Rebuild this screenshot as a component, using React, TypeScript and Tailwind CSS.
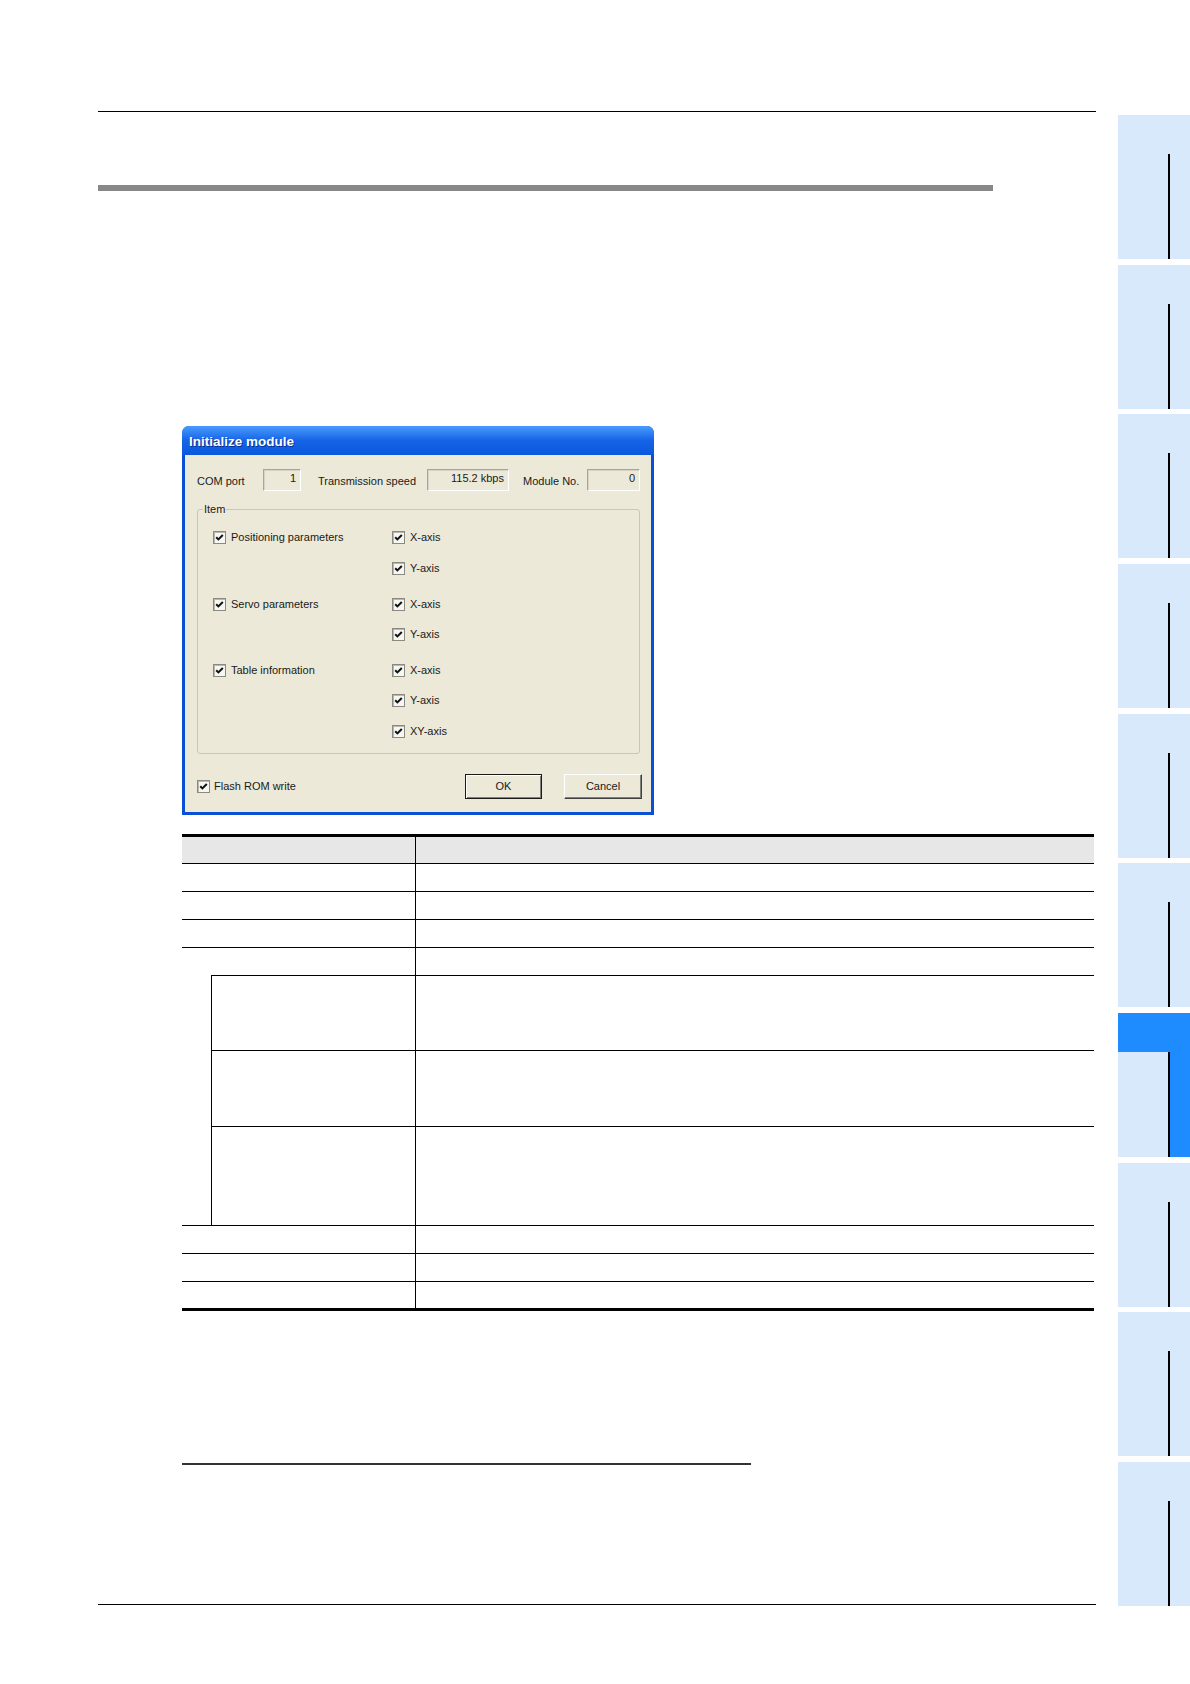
import React from "react";

const font = { fontFamily: '"Liberation Sans", Arial, sans-serif' };

function Check() {
  return (
    <span className="flex h-[13px] w-[13px] shrink-0 items-center justify-center border border-[#8a8a80] bg-[#f6f6f2] shadow-[inset_1px_1px_0_#b8b8b0]">
      <svg width="9" height="9" viewBox="0 0 9 9">
        <path d="M1.2 4.2 L3.4 6.4 L7.8 2" fill="none" stroke="#111" strokeWidth="2" />
      </svg>
    </span>
  );
}

function CheckItem({ label }: { label: string }) {
  return (
    <div className="flex h-[20px] items-center gap-[5px]">
      <Check />
      <span className="text-[11px] leading-none text-[#1a1a1a]">{label}</span>
    </div>
  );
}

function ValueBox({ w, value }: { w: string; value: string }) {
  return (
    <div
      className={`${w} flex h-[22px] items-start justify-end border-t border-l border-[#a7a699] border-b border-r border-b-white border-r-white bg-[#ece9d8] pr-[4px] pt-[3px] text-[11px] leading-none text-[#1a1a1a] shadow-[inset_1px_1px_0_#d6d3c6]`}
    >
      {value}
    </div>
  );
}

function Dialog() {
  return (
    <div
      className="ml-[84px] flex h-[389px] w-[472px] flex-col rounded-t-[7px] bg-[#0a4fd6]"
      style={font}
    >
      <div className="flex h-[29px] items-center rounded-t-[7px] bg-gradient-to-b from-[#4a9bff] via-[#1563e6] to-[#0a58de] pl-[7px] pt-[3px]">
        <span className="text-[13.5px] font-bold text-white [text-shadow:1px_1px_0_#0a2f8a]">
          Initialize module
        </span>
      </div>
      <div className="mx-[3px] mb-[3px] flex flex-1 flex-col bg-[#ece9d8] pl-[12px]">
        <div className="mt-[14px] flex h-[22px] items-center text-[11px] text-[#1a1a1a]">
          <span className="w-[66px] pt-[3px]">COM port</span>
          <ValueBox w="w-[38px]" value="1" />
          <span className="ml-[17px] w-[109px] pt-[3px]">Transmission speed</span>
          <ValueBox w="w-[82px]" value="115.2 kbps" />
          <span className="ml-[14px] w-[64px] pt-[3px]">Module No.</span>
          <ValueBox w="w-[53px]" value="0" />
        </div>

        <div className="relative mt-[18px] h-[245px] w-[443px] rounded-[3px] border border-[#c9c7b9] pl-[15px] pt-[17px]">
          <span className="absolute left-[5px] top-[-8px] bg-[#ece9d8] px-[1px] text-[11px] leading-[14px] text-[#1a1a1a]">
            Item
          </span>
          <div className="flex">
            <div className="w-[179px]">
              <CheckItem label="Positioning parameters" />
            </div>
            <div className="flex flex-col gap-[11px]">
              <CheckItem label="X-axis" />
              <CheckItem label="Y-axis" />
            </div>
          </div>
          <div className="mt-[16px] flex">
            <div className="w-[179px]">
              <CheckItem label="Servo parameters" />
            </div>
            <div className="flex flex-col gap-[10px]">
              <CheckItem label="X-axis" />
              <CheckItem label="Y-axis" />
            </div>
          </div>
          <div className="mt-[16px] flex">
            <div className="w-[179px]">
              <CheckItem label="Table information" />
            </div>
            <div className="flex flex-col gap-[10.5px]">
              <CheckItem label="X-axis" />
              <CheckItem label="Y-axis" />
              <CheckItem label="XY-axis" />
            </div>
          </div>
        </div>

        <div className="mt-[20px] flex h-[25px] items-center">
          <div className="w-[268px]">
            <div className="flex items-center gap-[4px]">
              <Check />
              <span className="text-[11px] leading-none text-[#1a1a1a]">Flash ROM write</span>
            </div>
          </div>
          <div className="flex h-[25px] w-[77px] items-center justify-center border border-[#1a1a1a] bg-[#ece9d8] text-[11px] text-[#1a1a1a] shadow-[inset_1px_1px_0_#ffffff,inset_-1px_-1px_0_#808080]">
            OK
          </div>
          <div className="ml-[22px] flex h-[25px] w-[78px] items-center justify-center border-t border-l border-white border-b border-r border-b-[#404040] border-r-[#404040] bg-[#ece9d8] text-[11px] text-[#1a1a1a] shadow-[inset_-1px_-1px_0_#808080]">
            Cancel
          </div>
        </div>
      </div>
    </div>
  );
}

function Row({ h }: { h: string }) {
  return (
    <div className={`flex ${h} border-t border-black`}>
      <div className="w-[234px] border-r border-black" />
      <div className="flex-1" />
    </div>
  );
}

function SubRow({ h }: { h: string }) {
  return (
    <div className={`flex ${h} border-t border-black`}>
      <div className="w-[204px] border-r border-black" />
      <div className="flex-1" />
    </div>
  );
}

function Table() {
  return (
    <div className="ml-[84px] flex w-[912px] flex-col border-t-[3px] border-b-[3px] border-black">
      <div className="flex h-[26px] bg-[#e7e7e7]">
        <div className="w-[234px] border-r border-black" />
        <div className="flex-1" />
      </div>
      <Row h="h-[28px]" />
      <Row h="h-[28px]" />
      <Row h="h-[28px]" />
      <Row h="h-[28px]" />
      <div className="flex">
        <div className="w-[29px]" />
        <div className="flex flex-1 flex-col border-l border-black">
          <SubRow h="h-[75px]" />
          <SubRow h="h-[76px]" />
          <SubRow h="h-[99px]" />
        </div>
      </div>
      <Row h="h-[28px]" />
      <Row h="h-[28px]" />
      <Row h="h-[27px]" />
    </div>
  );
}

function Tab({ active }: { active?: boolean }) {
  if (active) {
    return (
      <div className="flex h-[144px] flex-col bg-[#d8e9fb]">
        <div className="h-[39px] bg-[#1e8cff]" />
        <div className="flex flex-1">
          <div className="w-[50px] bg-[#d8e9fb]" />
          <div className="w-[2px] bg-black" />
          <div className="flex-1 bg-[#1e8cff]" />
        </div>
      </div>
    );
  }
  return (
    <div className="flex h-[144px] flex-col bg-[#d8e9fb] pl-[50px] pt-[39px]">
      <div className="w-[2px] flex-1 bg-black" />
    </div>
  );
}

export default function App() {
  const tabs = [0, 1, 2, 3, 4, 5, 6, 7, 8, 9];
  return (
    <div className="flex h-[1684px] w-[1190px] overflow-hidden bg-white">
      <div className="flex w-[1118px] flex-col pl-[98px]">
        <div className="mt-[111px] h-px w-[998px] bg-black" />
        <div className="mt-[73px] h-[6px] w-[895px] bg-[#888888]" />
        <div className="mt-[235px]">
          <Dialog />
        </div>
        <div className="mt-[19px]">
          <Table />
        </div>
        <div className="ml-[84px] mt-[152px] h-[2px] w-[569px] bg-[#333333]" />
        <div className="mt-[139px] h-px w-[998px] bg-black" />
      </div>
      <div className="flex w-[72px] flex-col gap-[5.67px] pt-[115px]">
        {tabs.map((i) => (
          <Tab key={i} active={i === 6} />
        ))}
      </div>
    </div>
  );
}
